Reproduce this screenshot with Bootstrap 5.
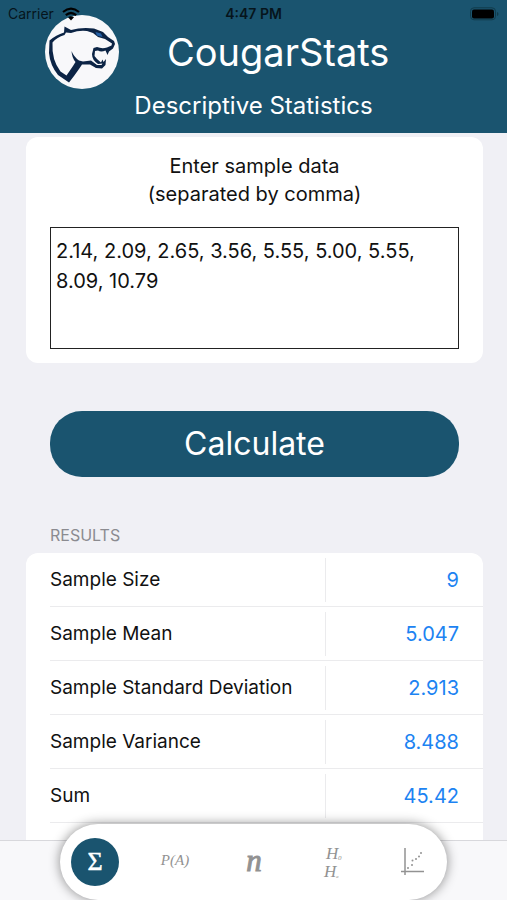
<!DOCTYPE html>
<html lang="en">
<head>
<meta charset="utf-8">
<meta name="viewport" content="width=device-width, initial-scale=1">
<title>CougarStats</title>
<link href="https://cdn.jsdelivr.net/npm/bootstrap@5.3.0/dist/css/bootstrap.min.css" rel="stylesheet">
<style>
  :root { --brand: #1a546f; --rule: #ebebed; }
  body { font-family: Inter, "Liberation Sans", sans-serif; background: #f0f0f5; color: #111; }
  .app-header { background: var(--brand); color: #fff; padding: 15px 24px 10px; }
  .status-bar { color: #06141c; font-size: 14px; line-height: 28px; padding: 0 8px; z-index: 1; }
  .status-bar > * { flex: 1 1 0; }
  .logo { width: 74px; height: 74px; margin-left: 21px; }
  .app-title { font-size: 38px; line-height: 48px; font-weight: 400; }
  .app-subtitle { font-size: 24px; line-height: 34px; font-weight: 400; }
  .page-body { padding: 4px 24px 0 26px; min-height: 0; overflow: auto; scrollbar-width: none; }
  .page-body::-webkit-scrollbar { display: none; }
  .panel { background: #fff; border-radius: 12px; }
  .panel-form { padding: 15px 24px 14px; }
  .field-label { font-size: 20px; line-height: 28px; margin-bottom: 19px; }
  .sample-input { height: 122px; border: 1px solid #222; border-radius: 0; padding: 8px 5px; font-size: 20px; line-height: 30px; resize: none; color: #111; }
  .btn-calc { height: 66px; border-radius: 32px; background: var(--brand); color: #fff; font-size: 32px; font-weight: 400; }
  .btn-calc:hover { background: #164860; color: #fff; }
  .calc-row { padding: 48px 24px; }
  .section-title { font-size: 16px; line-height: 20px; color: #8b8b90; font-weight: 400; padding: 0 24px; margin-bottom: 8px; }
  .results { padding-left: 24px; }
  .results th, .results td { padding: 5px 0 4px; border-bottom: 1px solid var(--rule); line-height: 44px; background: transparent; }
  .results th { font-size: 19px; font-weight: 400; color: #111; }
  .results td { width: 158px; font-size: 20px; text-align: right; }
  .value { border-left: 1px solid var(--rule); color: #1c83f2; padding-right: 24px; }
  .tab-strip { height: 60px; background: #f8f8fa; border-top: 1px solid #d8d8dc; padding: 0 60px; }
  .tab-pill { height: 76px; border-radius: 38px; background: #fff; padding: 0 11px; box-shadow: 0 0 12px rgba(0,0,0,.45); }
  .tab-btn { width: 48px; height: 48px; color: #929292; }
  .tab-btn.active { background: var(--brand); color: #fff; border-radius: 50%; }
  .tab-btn svg { width: 48px; height: 48px; }
  .tab-btn text { font-family: "Liberation Serif", serif; }
</style>
<script src="https://cdn.jsdelivr.net/npm/bootstrap@5.3.0/dist/js/bootstrap.bundle.min.js"></script>
</head>
<body class="vh-100 overflow-hidden d-flex flex-column">

<header class="app-header position-relative flex-shrink-0">
  <div class="status-bar position-absolute top-0 start-0 w-100 d-flex align-items-center">
    <div class="d-flex align-items-center gap-2">
      <span>Carrier</span>
      <svg width="18" height="14" viewBox="0 0 18 14" fill="none" stroke="#000" stroke-width="2.2" aria-hidden="true">
        <path d="M1 5Q9 -1.600 17 5M3.800 8.200Q9 3.800 14.200 8.200"/><path d="M9 13.500 6 10.300Q9 8.200 12 10.300z" fill="#000" stroke="none"/>
      </svg>
    </div>
    <div class="text-center fw-semibold">4:47 PM</div>
    <div class="d-flex justify-content-end">
      <svg width="29" height="14" viewBox="0 0 29 14" aria-hidden="true">
        <rect x=".5" y=".8" width="25" height="12" rx="3.500" fill="none" stroke="#113b4b"/><rect x="2" y="2.400" width="22" height="9" rx="2" fill="#000"/><path d="M27 5v4q1.500-.6 1.500-2T27 5z" fill="#113b4b"/>
      </svg>
    </div>
  </div>
  <div class="d-flex align-items-center">
    <svg class="logo flex-shrink-0 me-5" viewBox="0 0 74 74" role="img" aria-label="Cougar logo">
      <circle cx="37" cy="37" r="37" fill="#f8f8fa"/>
      <path fill="#0c2445" fill-rule="evenodd" d="M19.500 11.500 26 15Q37 11.800 49 13.500L58 17Q62 22 69 26L70 29 68 33.500 64 36.500 62.500 40 60.500 35.500Q56 37.500 53 35.500L50 36 49.500 41 52 44 56 47.500 57.500 44.500 58.500 47 61 44 60.500 50 57 53.500 51 53 45 49.500 37 49.500 34 54 29 61 24 67.500 13 60Q5 50 4 38L4.500 25.500Q11 20 19 17.500z
        M21 17.500 19.500 20Q12 22 7.500 27.500Q6.500 45 15.500 56.500L21.500 60.500 28 51 30.500 47Q27 43 26.500 36Q29 42 34 45.500L38 46.500 46 45.500 52 50 56.500 50 57.500 48.500 53 49Q47 45 47 39L48.500 33 52 32Q57 34 62 32.500L66.500 30.500 67 28.500 60 24 53 22 48 18 42 16Q34 15 26 18z"/>
      <path fill="#2461a8" d="M50.500 17 56 18.500 57.500 22 52 20.500z"/>
    </svg>
    <h1 class="app-title mb-0">CougarStats</h1>
  </div>
  <h2 class="app-subtitle text-center mb-0">Descriptive Statistics</h2>
</header>

<main class="page-body flex-grow-1">
  <form>
    <section class="panel panel-form">
      <label for="sample" class="field-label d-block text-center">Enter sample data<br>(separated by comma)</label>
      <textarea id="sample" class="sample-input d-block w-100 overflow-hidden" spellcheck="false">2.14, 2.09, 2.65, 3.56, 5.55, 5.00, 5.55, 8.09, 10.79</textarea>
    </section>
    <div class="calc-row">
      <button type="button" class="btn btn-calc w-100 py-0">Calculate</button>
    </div>
  </form>
  <h3 class="section-title text-uppercase" id="results-title">Results</h3>
  <section class="panel results" aria-labelledby="results-title">
    <table class="table table-borderless mb-0">
      <tbody>
        <tr><th scope="row">Sample Size</th><td><div class="value">9</div></td></tr>
        <tr><th scope="row">Sample Mean</th><td><div class="value">5.047</div></td></tr>
        <tr><th scope="row">Sample Standard Deviation</th><td><div class="value">2.913</div></td></tr>
        <tr><th scope="row">Sample Variance</th><td><div class="value">8.488</div></td></tr>
        <tr><th scope="row">Sum</th><td><div class="value">45.42</div></td></tr>
        <tr><th scope="row">&nbsp;</th><td><div class="value">&nbsp;</div></td></tr>
      </tbody>
    </table>
  </section>
</main>

<nav class="tab-strip flex-shrink-0 position-relative d-flex align-items-end" aria-label="Sections">
  <div class="tab-pill w-100 d-flex justify-content-between align-items-center">
    <button type="button" class="btn tab-btn active border-0 p-0" aria-label="Descriptive statistics" aria-current="page">
      <svg viewBox="0 0 48 48"><text x="24" y="32" font-size="26" text-anchor="middle" fill="currentColor" stroke="currentColor" stroke-width=".5">Σ</text></svg>
    </button>
    <button type="button" class="btn tab-btn border-0 p-0" aria-label="Probability">
      <svg viewBox="0 0 48 48"><text x="25" y="27" font-size="15" font-style="italic" text-anchor="middle" fill="currentColor">P(A)</text></svg>
    </button>
    <button type="button" class="btn tab-btn border-0 p-0" aria-label="Sample size">
      <svg viewBox="0 0 48 48"><text x="24" y="33" font-size="31" font-style="italic" text-anchor="middle" fill="currentColor" stroke="currentColor">n</text></svg>
    </button>
    <button type="button" class="btn tab-btn border-0 p-0" aria-label="Hypothesis tests">
      <svg viewBox="0 0 48 48" fill="currentColor" font-style="italic"><text x="17" y="21" font-size="17">H</text><text x="29" y="22" font-size="7">0</text><text x="15" y="39" font-size="17">H</text><text x="27" y="40" font-size="5">a</text></svg>
    </button>
    <button type="button" class="btn tab-btn border-0 p-0" aria-label="Regression">
      <svg viewBox="0 0 48 48" fill="currentColor"><path d="M17 10v27M13 33.500h23" fill="none" stroke="currentColor" stroke-width="1.500"/><circle cx="20" cy="30" r="1"/><circle cx="24" cy="27" r="1"/><circle cx="24.500" cy="22.500" r="1"/><circle cx="28" cy="21" r="1"/><circle cx="31" cy="18.500" r="1"/><circle cx="33" cy="15" r="1"/></svg>
    </button>
  </div>
</nav>
</body>
</html>
